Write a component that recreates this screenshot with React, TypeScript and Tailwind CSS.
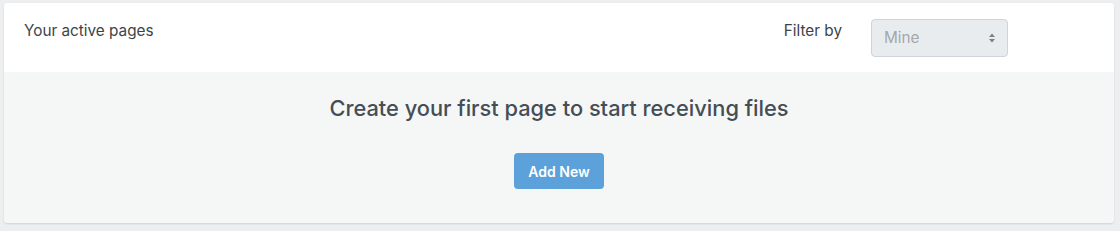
export default function App() {
  return (
    <div
      className="h-[231px] w-[1120px] bg-[#eceef0] pt-[3px] pl-[4px]"
      style={{ fontFamily: "Inter, 'Noto Sans', sans-serif" }}
    >
      <div className="w-[1110px] overflow-hidden rounded-[4px] bg-white shadow-[0_1px_2px_rgba(0,0,0,0.12)]">
        {/* Header */}
        <div className="flex h-[69px] items-start justify-between bg-white pl-[20px] pr-[106px]">
          <span className="mt-[19px] text-[15.3px] leading-[18px] text-[#3d4449]">
            Your active pages
          </span>
          <div className="flex items-start">
            <span className="mt-[19px] text-[15.3px] leading-[18px] text-[#3d4449]">
              Filter by
            </span>
            <div className="ml-[29px] mt-[16px] flex h-[38px] w-[137px] items-center justify-between rounded-[4px] border border-[#ced4da] bg-[#e9ecef] pl-[12px] pr-[11px]">
              <span className="text-[15.3px] text-[#a3a8ad]">Mine</span>
              <svg width="8" height="12" viewBox="0 0 8 12" className="text-[#7a8086]">
                <path d="M4 1.5 L7 5 H1 Z" fill="currentColor" />
                <path d="M4 10.5 L7 7 H1 Z" fill="currentColor" />
              </svg>
            </div>
          </div>
        </div>
        {/* Body */}
        <div className="flex h-[151px] flex-col items-center bg-[#f5f7f7]">
          <h2 className="mt-[22px] text-[21.8px] font-medium leading-[28px] text-[#454d55]">
            Create your first page to start receiving files
          </h2>
          <button className="mt-[31px] h-[36px] w-[90px] rounded-[4px] bg-[#5ca1d9] text-[14px] font-semibold text-white">
            Add New
          </button>
        </div>
      </div>
    </div>
  );
}
